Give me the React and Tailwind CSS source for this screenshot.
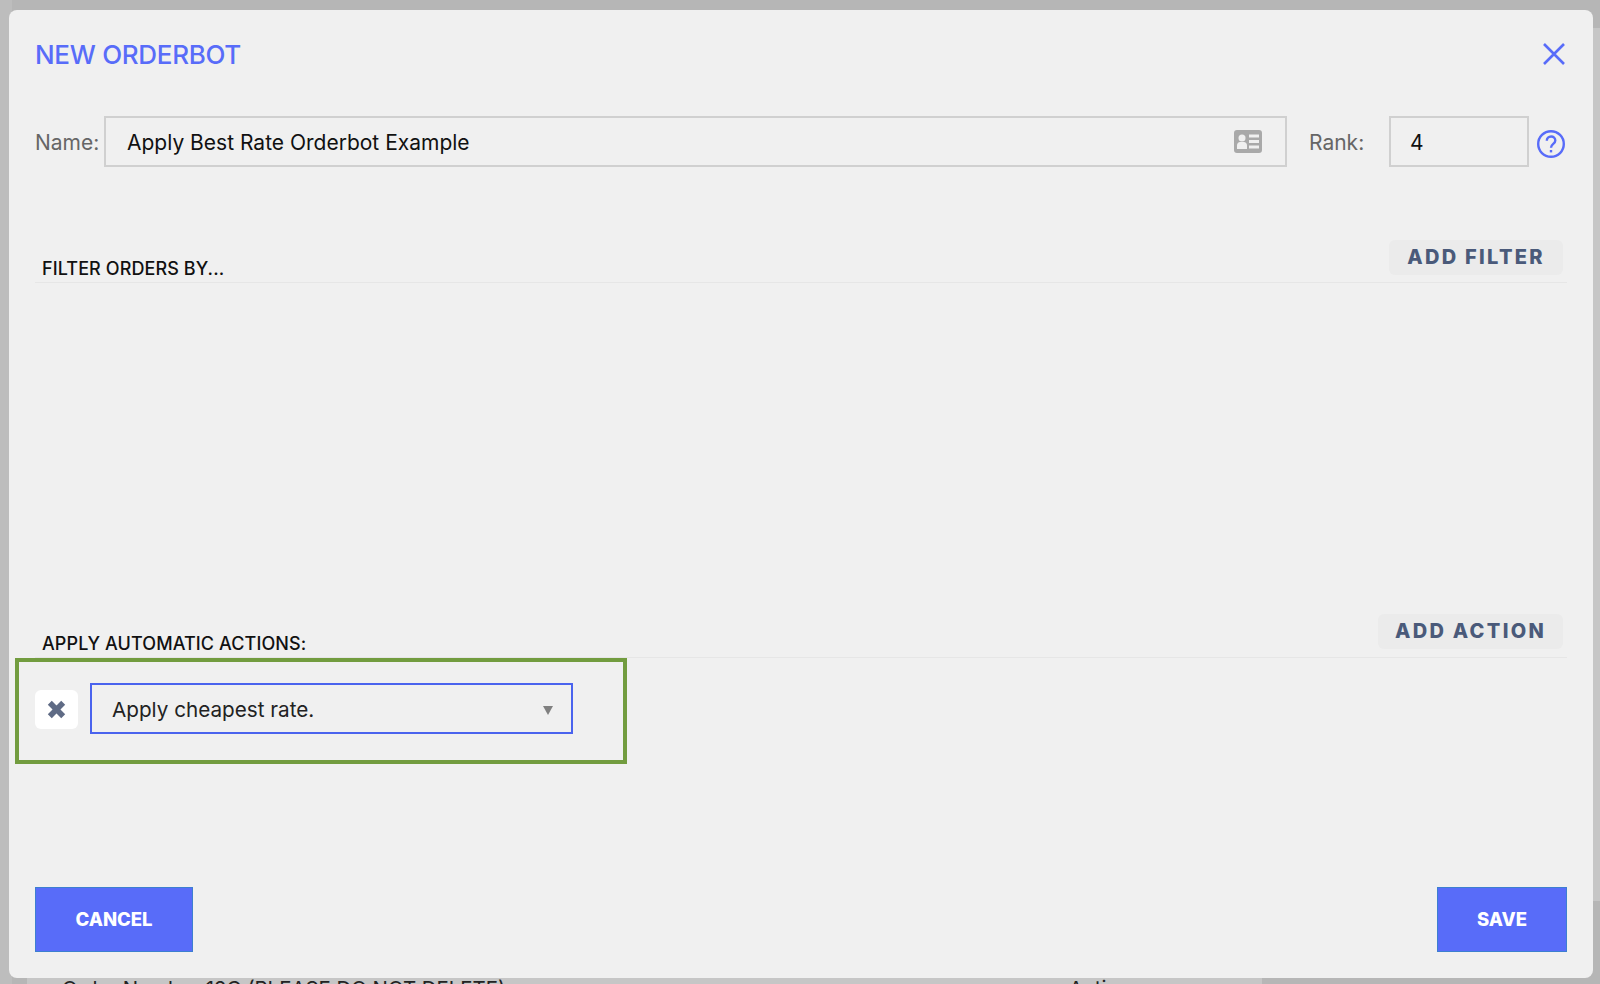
import React from 'react';

const SectionHeader = ({ title, action, buttonWidth, height, labelTop }) => (
  <div className={`${height} flex items-start justify-between border-b border-[#e6e6e6] shrink-0`}>
    <div className={`${labelTop} pl-[7px] text-[18px] leading-[20px] font-medium text-[#111111] tracking-[0.1px] font-['Inter',sans-serif]`}>{title}</div>
    <button className={`${buttonWidth} h-[35px] mr-[4px] pb-[2px] rounded-[6px] bg-[#ebebeb] text-[#4a5a7a] text-[20px] font-extrabold tracking-[2.300px] font-['Inter',sans-serif] flex items-center justify-center`}>
      {action}
    </button>
  </div>
);

const IdCardIcon = () => (
  <svg width="28" height="23" viewBox="0 0 28 23">
    <rect width="28" height="23" rx="3" fill="#a9a9a9" />
    <circle cx="8" cy="8" r="3.500" fill="#f0f0f0" />
    <path d="M3 19v-3.500c0-2 1.500-3.500 3-3.500h4c1.500 0 3 1.500 3 3.500V19z" fill="#f0f0f0" />
    <path d="M15 4.500h10v3H15zM15 10h10v3H15zM15 15.500h10v3H15z" fill="#f0f0f0" />
  </svg>
);

const HelpIcon = () => (
  <svg width="28" height="28" viewBox="0 0 28 28" fill="none" stroke="#586cf9" strokeWidth="2.400">
    <circle cx="14" cy="14" r="12.800" />
    <path d="M9.800 10.800c0-2.600 1.900-4.300 4.300-4.300s4.200 1.700 4.200 3.900c0 3.500-4.300 3.400-4.300 7.300" />
    <path d="M14 20v2.400" />
  </svg>
);

export default function App() {
  return (
    <div className="relative w-[1600px] h-[984px] overflow-hidden bg-[#b6b6b6] font-['Inter',sans-serif]">
      {/* page behind the dialog */}
      <div className="absolute left-0 top-0 w-[12px] h-full bg-[#bdbdbd]" />
      <div className="absolute right-0 top-[28px] w-[7px] h-[873px] bg-[#c6c6c6]" />
      <div className="absolute left-[27px] top-[978px] w-[1235px] h-[6px] bg-[#c6c6c6] overflow-hidden">
        <div className="absolute left-[35px] top-[-1px] text-[20.400px] leading-[24px] text-[#222222] whitespace-nowrap">Order Number 12C (PLEASE DO NOT DELETE)</div>
        <div className="absolute left-[1042px] top-[-1px] text-[20.400px] leading-[24px] text-[#222222]">Active</div>
      </div>

      <div className="absolute left-[9px] top-[10px] w-[1584px] h-[968px] rounded-[8px] bg-[#f0f0f0] px-[26px] pb-[26px] flex flex-col">
        <div className="h-[88px] mb-[18px] flex items-center justify-between shrink-0">
          <h1 className="text-[26px] font-medium text-[#586cf9] tracking-[-0.300px]">NEW ORDERBOT</h1>
          <svg width="22" height="22" viewBox="0 0 22 22" stroke="#586cf9" strokeWidth="2.600" className="mr-[2px]">
            <path d="M1 1l20 20M21 1L1 21" />
          </svg>
        </div>

        <div className="h-[51px] flex items-center shrink-0">
          <span className="w-[69px] pt-[2px] text-[21px] text-[#666666]">Name:</span>
          <div className="w-[1183px] h-full border-2 border-[#d0d0d0] pl-[21px] pr-[23px] flex items-center justify-between">
            <span className="pt-[2px] text-[21px] text-[#111111]">Apply Best Rate Orderbot Example</span>
            <IdCardIcon />
          </div>
          <span className="ml-[22px] w-[80px] pt-[2px] text-[21px] text-[#666666]">Rank:</span>
          <div className="w-[140px] h-full border-2 border-[#d0d0d0] pl-[19px] pt-[2px] flex items-center text-[21px] text-[#111111]">4</div>
          <div className="ml-[8px] mt-[5px] flex"><HelpIcon /></div>
        </div>

        <div className="mt-[73px]">
          <SectionHeader title="FILTER ORDERS BY..." action="ADD FILTER" buttonWidth="w-[174px]" height="h-[43px]" labelTop="mt-[19px]" />
        </div>

        <div className="mt-[331px]">
          <SectionHeader title="APPLY AUTOMATIC ACTIONS:" action="ADD ACTION" buttonWidth="w-[185px]" height="h-[44px]" labelTop="mt-[20px]" />
        </div>

        <div className="-ml-[20px] w-[612px] h-[106px] border-[4px] border-[#729c3f] pl-[16px] pt-[21px] flex items-start gap-[12px] shrink-0">
          <button className="w-[43px] h-[39px] mt-[7px] rounded-[6px] bg-white flex items-center justify-center">
            <svg width="19" height="19" viewBox="0 0 17 17" stroke="#5f6b85" strokeWidth="5">
              <path d="M2.500 2.500l12 12M14.500 2.500l-12 12" />
            </svg>
          </button>
          <div className="w-[483px] h-[51px] border-2 border-[#4a63ee] pl-[20px] pr-[18px] flex items-center justify-between">
            <span className="pt-[2px] text-[20.700px] text-[#222222]">Apply cheapest rate.</span>
            <svg width="10" height="9" viewBox="0 0 10 9" className="mt-[4px]">
              <path d="M0 0h10L5 9z" fill="#808080" />
            </svg>
          </div>
        </div>

        <div className="mt-auto flex justify-between">
          <button className="w-[158px] h-[65px] bg-[#586cf9] border border-[#3d7fd0] text-white text-[18.500px] font-extrabold">CANCEL</button>
          <button className="w-[130px] h-[65px] bg-[#586cf9] border border-[#3d7fd0] text-white text-[18.500px] font-extrabold">SAVE</button>
        </div>
      </div>
    </div>
  );
}
